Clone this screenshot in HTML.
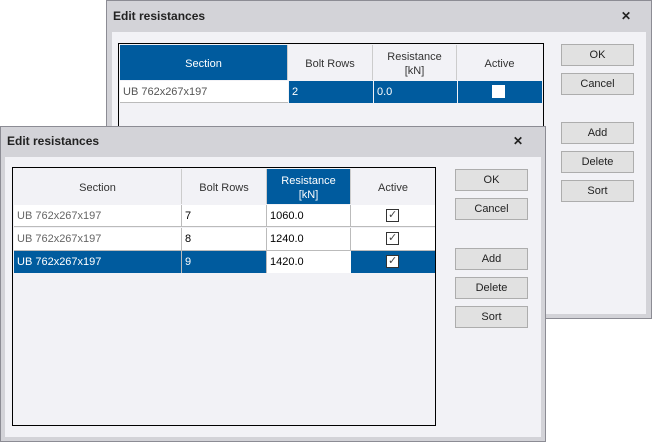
<!DOCTYPE html>
<html><head><style>
*{box-sizing:border-box;margin:0;padding:0}
body{width:652px;height:442px;background:#fff;position:relative;overflow:hidden;font-family:"Liberation Sans",sans-serif;font-size:11px;color:#222}
.dlg{position:absolute;background:#d3d3d8;border:1px solid #8c8c94}
.content{position:absolute;background:#f2f2f6}
.title{position:absolute;font-weight:bold;font-size:12px;color:#222}
.x{position:absolute;font-weight:bold;font-size:12px}
.btn{position:absolute;width:73px;height:22px;background:#e1e1e1;border:1px solid #adadad;text-align:center;line-height:20px;font-size:11px;color:#222}
.tbl{position:absolute;border:1px solid #000;background:#f2f2f6}
.c{position:absolute;font-size:11px;line-height:22px;padding-left:3px;white-space:nowrap;overflow:hidden}
.h{position:absolute;text-align:center;font-size:11px;color:#333;background:#f2f2f6;border-right:1px solid #ccc}
.blue{background:#005b9e;color:#fff}
.w{background:#fff}
.cb{position:absolute;width:13px;height:13px;border:1px solid #333;background:#fff}
.ck{position:absolute;font-size:11px;color:#444}
</style></head><body>

<div class="dlg" style="left:106px;top:0;width:546px;height:319px">
<div class="content" style="left:5px;top:31px;width:534px;height:282px"></div>
</div>
<div class="title" style="left:113px;top:9px">Edit resistances</div>
<div class="x" style="left:621px;top:9px">✕</div>
<div class="tbl" style="left:118px;top:43px;width:426px;height:90px">
 <div class="h blue" style="left:1px;top:1px;width:168px;height:35px;line-height:38px;color:#fff">Section</div>
 <div class="h" style="left:169px;top:1px;width:85px;height:35px;line-height:38px">Bolt Rows</div>
 <div class="h" style="left:254px;top:1px;width:84px;height:35px;line-height:14px;padding-top:5px">Resistance<br>[kN]</div>
 <div class="h" style="left:338px;top:1px;width:85px;height:35px;line-height:38px;border-right:none">Active</div>
 <div class="c w" style="left:1px;top:37px;width:168px;height:22px;color:#555;border-bottom:1px solid #bbb">UB 762x267x197</div>
 <div class="c blue" style="left:170px;top:37px;width:84px;height:22px">2</div>
 <div class="c blue" style="left:255px;top:37px;width:83px;height:22px">0.0</div>
 <div class="c blue" style="left:339px;top:37px;width:84px;height:22px"></div>
 <div class="cb" style="left:373px;top:41px;border-color:#fff"></div>
</div>
<div class="btn" style="left:561px;top:44px">OK</div>
<div class="btn" style="left:561px;top:73px">Cancel</div>
<div class="btn" style="left:561px;top:122px">Add</div>
<div class="btn" style="left:561px;top:151px">Delete</div>
<div class="btn" style="left:561px;top:180px">Sort</div>

<div class="dlg" style="left:0;top:126px;width:546px;height:316px">
<div class="content" style="left:4px;top:30px;width:536px;height:280px"></div>
</div>
<div class="title" style="left:7px;top:134px">Edit resistances</div>
<div class="x" style="left:513px;top:134px">✕</div>
<div class="tbl" style="left:12px;top:167px;width:424px;height:259px">
 <div class="h" style="left:1px;top:1px;width:168px;height:35px;line-height:38px">Section</div>
 <div class="h" style="left:169px;top:1px;width:85px;height:35px;line-height:38px">Bolt Rows</div>
 <div class="h blue" style="left:254px;top:1px;width:84px;height:35px;line-height:14px;padding-top:5px;color:#fff">Resistance<br>[kN]</div>
 <div class="h" style="left:338px;top:1px;width:84px;height:35px;line-height:38px;border-right:none">Active</div>

 <div class="c w" style="left:1px;top:37px;width:168px;height:22px;color:#666;border-right:1px solid #bbb;border-bottom:1px solid #bbb">UB 762x267x197</div>
 <div class="c w" style="left:169px;top:37px;width:85px;height:22px;color:#000;border-right:1px solid #bbb;border-bottom:1px solid #bbb">7</div>
 <div class="c w" style="left:254px;top:37px;width:84px;height:22px;color:#000;border-right:1px solid #bbb;border-bottom:1px solid #bbb">1060.0</div>
 <div class="c w" style="left:338px;top:37px;width:84px;height:22px;border-bottom:1px solid #bbb"></div>
 <div class="cb" style="left:373px;top:41px"></div><div class="ck" style="left:375px;top:40px">✓</div>

 <div class="c w" style="left:1px;top:60px;width:168px;height:23px;color:#666;border-right:1px solid #bbb;border-bottom:1px solid #bbb">UB 762x267x197</div>
 <div class="c w" style="left:169px;top:60px;width:85px;height:23px;color:#000;border-right:1px solid #bbb;border-bottom:1px solid #bbb">8</div>
 <div class="c w" style="left:254px;top:60px;width:84px;height:23px;color:#000;border-right:1px solid #bbb;border-bottom:1px solid #bbb">1240.0</div>
 <div class="c w" style="left:338px;top:60px;width:84px;height:23px;border-bottom:1px solid #bbb"></div>
 <div class="cb" style="left:373px;top:64px"></div><div class="ck" style="left:375px;top:63px">✓</div>

 <div class="c blue" style="left:1px;top:83px;width:168px;height:22px;border-right:1px solid #bbb">UB 762x267x197</div>
 <div class="c blue" style="left:169px;top:83px;width:85px;height:22px;border-right:1px solid #bbb">9</div>
 <div class="c w" style="left:254px;top:83px;width:84px;height:22px;color:#000">1420.0</div>
 <div class="c blue" style="left:338px;top:83px;width:84px;height:22px"></div>
 <div class="cb" style="left:373px;top:87px"></div><div class="ck" style="left:375px;top:86px">✓</div>
</div>
<div class="btn" style="left:455px;top:169px">OK</div>
<div class="btn" style="left:455px;top:198px">Cancel</div>
<div class="btn" style="left:455px;top:248px">Add</div>
<div class="btn" style="left:455px;top:277px">Delete</div>
<div class="btn" style="left:455px;top:306px">Sort</div>
</body></html>
